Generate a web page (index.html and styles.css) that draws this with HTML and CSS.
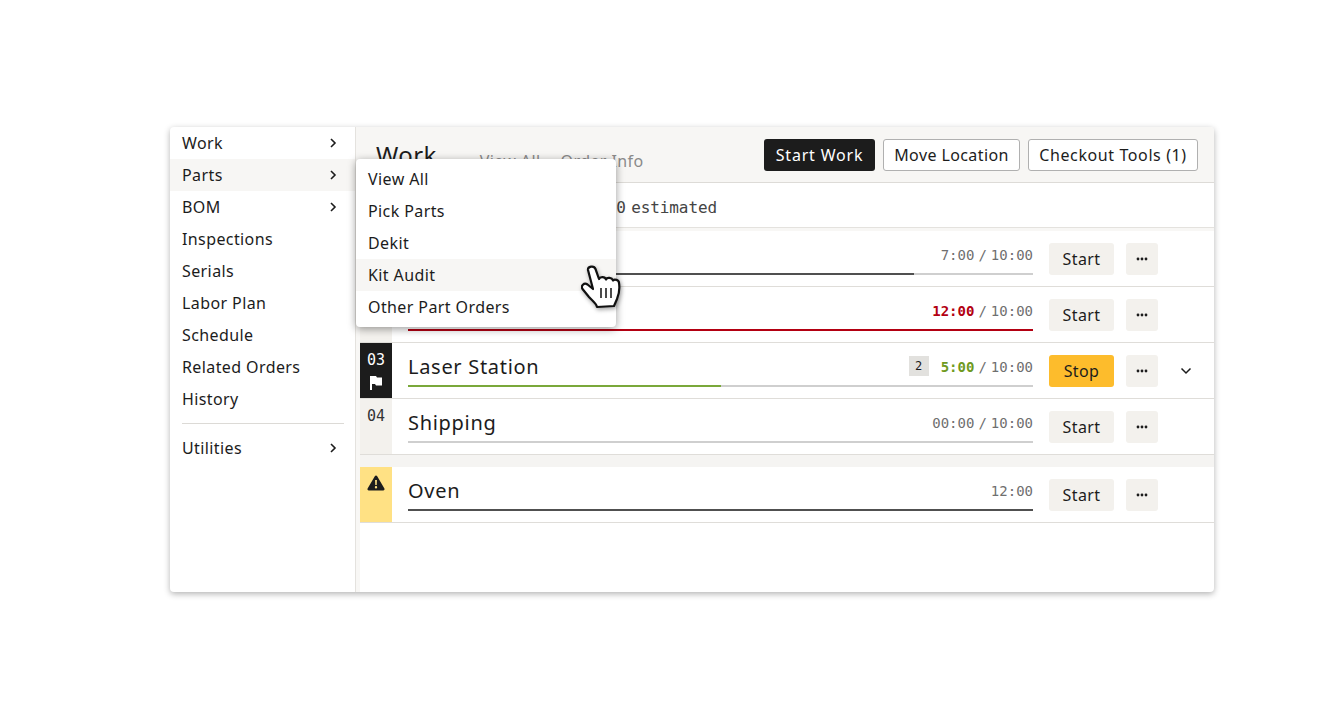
FILE: index.html
```html
<!DOCTYPE html>
<html lang="en">
<head>
    <meta charset="UTF-8">
    <meta name="viewport" content="width=device-width, initial-scale=1.0">
    <title>Work Order</title>
    <link rel="stylesheet" href="styles.css">
</head>
<body>
    <div class="app-window">
        <!-- Left nav -->
        <nav class="side-nav">
            <a class="nav-item">Work <svg class="chev" viewBox="0 0 10 12"><path d="M3 2l4 4-4 4"/></svg></a>
            <a class="nav-item active">Parts <svg class="chev" viewBox="0 0 10 12"><path d="M3 2l4 4-4 4"/></svg></a>
            <a class="nav-item">BOM <svg class="chev" viewBox="0 0 10 12"><path d="M3 2l4 4-4 4"/></svg></a>
            <a class="nav-item">Inspections</a>
            <a class="nav-item">Serials</a>
            <a class="nav-item">Labor Plan</a>
            <a class="nav-item">Schedule</a>
            <a class="nav-item">Related Orders</a>
            <a class="nav-item">History</a>
            <div class="nav-divider"></div>
            <a class="nav-item">Utilities <svg class="chev" viewBox="0 0 10 12"><path d="M3 2l4 4-4 4"/></svg></a>
        </nav>

        <!-- Main content -->
        <main class="main-panel">
            <header class="page-head">
                <h1 class="page-title">Work</h1>
                <div class="head-links">
                    <a>View All</a>
                    <a>Order Info</a>
                </div>
                <div class="head-actions">
                    <button class="btn btn-dark">Start Work</button>
                    <button class="btn btn-outline btn-move">Move Location</button>
                    <button class="btn btn-outline btn-tools">Checkout Tools (1)</button>
                </div>
            </header>

            <div class="sub-head">10:00 estimated</div>

            <div class="op-list">
                <div class="op-row">
                    <div class="op-num"></div>
                    <div class="op-body">
                        <div class="op-line">
                            <span class="op-name"></span>
                            <span class="op-time">7:00 <i>/</i> 10:00</span>
                        </div>
                        <div class="track"><div class="fill fill-dark" style="width: 81%"></div></div>
                    </div>
                    <button class="btn btn-soft btn-start">Start</button>
                    <button class="btn btn-soft btn-more"><svg viewBox="0 0 12 4"><circle cx="2" cy="2" r="1.4"/><circle cx="6" cy="2" r="1.4"/><circle cx="10" cy="2" r="1.4"/></svg></button>
                </div>
                <div class="op-row">
                    <div class="op-num"></div>
                    <div class="op-body">
                        <div class="op-line">
                            <span class="op-name"></span>
                            <span class="op-time"><b class="over">12:00</b> <i>/</i> 10:00</span>
                        </div>
                        <div class="track"><div class="fill fill-red" style="width: 100%"></div></div>
                    </div>
                    <button class="btn btn-soft btn-start">Start</button>
                    <button class="btn btn-soft btn-more"><svg viewBox="0 0 12 4"><circle cx="2" cy="2" r="1.4"/><circle cx="6" cy="2" r="1.4"/><circle cx="10" cy="2" r="1.4"/></svg></button>
                </div>
                <div class="op-row">
                    <div class="op-num op-num-dark">
                        03
                        <svg class="flag" viewBox="0 0 14 16"><path d="M1 1h6l1 1.500h5v8H7l-1-1.500H3V15H1z"/></svg>
                    </div>
                    <div class="op-body">
                        <div class="op-line">
                            <span class="op-name">Laser Station</span>
                            <span class="op-count">2</span>
                            <span class="op-time"><b class="running">5:00</b> <i>/</i> 10:00</span>
                        </div>
                        <div class="track"><div class="fill fill-green" style="width: 50%"></div></div>
                    </div>
                    <button class="btn btn-stop btn-start">Stop</button>
                    <button class="btn btn-soft btn-more"><svg viewBox="0 0 12 4"><circle cx="2" cy="2" r="1.4"/><circle cx="6" cy="2" r="1.4"/><circle cx="10" cy="2" r="1.4"/></svg></button>
                    <svg class="row-chev" viewBox="0 0 12 8"><path d="M1.500 1.500L6 6l4.500-4.500"/></svg>
                </div>
                <div class="op-row">
                    <div class="op-num">04</div>
                    <div class="op-body">
                        <div class="op-line">
                            <span class="op-name">Shipping</span>
                            <span class="op-time">00:00 <i>/</i> 10:00</span>
                        </div>
                        <div class="track"></div>
                    </div>
                    <button class="btn btn-soft btn-start">Start</button>
                    <button class="btn btn-soft btn-more"><svg viewBox="0 0 12 4"><circle cx="2" cy="2" r="1.4"/><circle cx="6" cy="2" r="1.4"/><circle cx="10" cy="2" r="1.4"/></svg></button>
                </div>

                <div class="op-gap"></div>

                <div class="op-row">
                    <div class="op-num op-num-warn">
                        <svg class="warn" viewBox="0 0 18 16"><path fill-rule="evenodd" d="M9 .5c.5 0 .9.3 1.200.7l7.200 12.400c.5.900-.1 2-1.200 2H1.800c-1.100 0-1.700-1.100-1.200-2L7.800 1.200C8.100.8 8.500.5 9 .5zM8.100 5l.2 5h1.400l.2-5zM9 11a1.200 1.200 0 100 2.400A1.200 1.200 0 009 11z"/></svg>
                    </div>
                    <div class="op-body">
                        <div class="op-line">
                            <span class="op-name">Oven</span>
                            <span class="op-time">12:00</span>
                        </div>
                        <div class="track"><div class="fill fill-dark" style="width: 100%"></div></div>
                    </div>
                    <button class="btn btn-soft btn-start">Start</button>
                    <button class="btn btn-soft btn-more"><svg viewBox="0 0 12 4"><circle cx="2" cy="2" r="1.4"/><circle cx="6" cy="2" r="1.4"/><circle cx="10" cy="2" r="1.4"/></svg></button>
                </div>
            </div>
        </main>

        <!-- Parts flyout -->
        <div class="fly-menu">
            <a class="fly-item">View All</a>
            <a class="fly-item">Pick Parts</a>
            <a class="fly-item">Dekit</a>
            <a class="fly-item active">Kit Audit</a>
            <a class="fly-item">Other Part Orders</a>
        </div>

        <!-- Hand cursor -->
        <svg class="hand" viewBox="0 0 40 46">
            <path fill="#fff" stroke="#111" stroke-width="2.2" stroke-linejoin="round" d="M7 6C6.500 2.500 13 1 14.500 5L18 15C19 12.500 24 12.500 25 15.500C26 13 31 13.500 32 16.500C33.500 14.500 38 16 38 19C39 25 38 30 36 35L33 42L16 43C15 39 11 36.500 8 33L1.500 25C-.5 22 3 18 6.500 20.500L12 25Z"/>
            <path fill="none" stroke="#111" stroke-width="1.500" d="M20 24v10M25 24v10M30 24v10"/>
        </svg>
    </div>
</body>
</html>
```
FILE: styles.css
```css
html {
    height: 100%;
}

body {
    margin: 0;
    padding: 127px 0 0 170px;
    box-sizing: border-box;
    min-height: 100%;
    background: #fff;
    color: #1c1c1c;
    font-family: 'Noto Sans', 'Inter', sans-serif;
    font-size: 16px;
}

.app-window {
    position: relative;
    display: flex;
    width: 1044px;
    height: 465px;
    background: #fff;
    border-radius: 4px;
    box-shadow: 0 2px 6px rgba(0, 0, 0, 0.3);
}

/* Left nav */
.side-nav {
    width: 185px;
    flex-shrink: 0;
    border-right: 1px solid #e4e2de;
}

.nav-item {
    display: flex;
    align-items: center;
    justify-content: space-between;
    height: 32px;
    padding: 0 17px 0 12px;
    letter-spacing: 0.4px;
}

.nav-item.active {
    background: #f7f6f4;
}

.chev {
    width: 10px;
    height: 12px;
    fill: none;
    stroke: #1c1c1c;
    stroke-width: 1.6;
}

.nav-divider {
    height: 1px;
    margin: 8px 11px 8px 12px;
    background: #dcdad6;
}

/* Main panel */
.main-panel {
    display: flex;
    flex-direction: column;
    flex: 1;
    min-width: 0;
}

.page-head {
    display: flex;
    align-items: center;
    height: 55px;
    padding: 0 16px 0 20px;
    background: #f7f6f4;
    border-bottom: 1px solid #dddbd7;
    border-radius: 0 4px 0 0;
}

.page-title {
    margin: 0;
    font-size: 24px;
    font-weight: 400;
    letter-spacing: 0.4px;
}

.head-links {
    display: flex;
    gap: 20px;
    margin: 13px 0 0 43px;
    color: #8a8a8a;
    font-size: 16px;
    letter-spacing: 0.4px;
}

.head-actions {
    display: flex;
    gap: 8px;
    margin-left: auto;
}

.btn {
    height: 32px;
    padding: 0;
    border: 1px solid transparent;
    border-radius: 3px;
    font-family: inherit;
    font-size: 16px;
    color: #1c1c1c;
    letter-spacing: 0.4px;
    cursor: pointer;
}

.btn-dark {
    width: 111px;
    background: #1c1c1c;
    color: #fff;
    letter-spacing: 0.8px;
}

.btn-outline {
    background: #fff;
    border-color: #b0b0b0;
}

.btn-move {
    width: 137px;
}

.btn-tools {
    width: 170px;
    letter-spacing: 0.6px;
}

.btn-soft {
    background: #f3f1ed;
}

.btn-stop {
    background: #fdbc2c;
}

.btn-start {
    width: 65px;
    margin-left: 16px;
}

.btn-more {
    display: flex;
    align-items: center;
    justify-content: center;
    width: 32px;
    margin-left: 12px;
}

.btn-more svg {
    width: 12px;
    height: 4px;
    fill: #1c1c1c;
}

.sub-head {
    height: 44px;
    line-height: 49px;
    padding-left: 222px;
    border-bottom: 1px solid #e4e2de;
    font-family: 'DejaVu Sans Mono', monospace;
    font-size: 16px;
    letter-spacing: -0.1px;
    word-spacing: -4px;
    color: #444;
}

/* Operation rows */
.op-list {
    flex: 1;
    border-top: 3px solid #f8f7f5;
    border-left: 4px solid #f8f7f5;
}

.op-row {
    position: relative;
    display: flex;
    align-items: flex-start;
    height: 55px;
    border-bottom: 1px solid #dfddd9;
    padding-right: 56px;
}

.op-num {
    width: 32px;
    height: 100%;
    padding-top: 8px;
    box-sizing: border-box;
    background: #f3f1ed;
    font-family: 'DejaVu Sans Mono', monospace;
    font-size: 15px;
    color: #333;
    text-align: center;
}

.op-num-dark {
    background: #1c1c1c;
    color: #fff;
}

.op-num-warn {
    background: #ffe184;
}

.flag {
    display: block;
    width: 14px;
    height: 16px;
    margin: 6px auto 0;
    fill: #fff;
}

.warn {
    display: block;
    width: 18px;
    height: 16px;
    margin: 0 auto;
    fill: #1c1c1c;
}

.op-body {
    flex: 1;
    min-width: 0;
    margin-left: 16px;
}

.op-line {
    display: flex;
    align-items: center;
    box-sizing: border-box;
    height: 42px;
    padding-top: 4px;
}

.op-name {
    flex: 1;
    font-size: 20px;
    letter-spacing: 0.7px;
}

.op-count {
    width: 20px;
    height: 20px;
    margin: 0 12px 0 0;
    background: #e2e1de;
    font-family: 'DejaVu Sans Mono', monospace;
    font-size: 12px;
    line-height: 20px;
    text-align: center;
}

.op-time {
    display: flex;
    gap: 4px;
    margin-top: 2px;
    font-family: 'DejaVu Sans Mono', monospace;
    font-size: 14px;
    color: #6f6f6f;
}

.op-time i {
    font-style: normal;
}

.over {
    color: #b30012;
}

.running {
    color: #6f9a1f;
}

.track {
    height: 2px;
    background: #cfcfcf;
}

.fill {
    height: 100%;
}

.fill-dark {
    background: #505050;
}

.fill-red {
    background: #b30012;
}

.fill-green {
    background: #7aa83a;
}

.op-row .btn {
    margin-top: 12px;
}

.row-chev {
    position: absolute;
    right: 22px;
    top: 24px;
    width: 12px;
    height: 8px;
    fill: none;
    stroke: #1c1c1c;
    stroke-width: 1.5;
}

.op-gap {
    height: 12px;
    background: #f5f4f2;
}

/* Flyout */
.fly-menu {
    position: absolute;
    left: 186px;
    top: 32px;
    width: 260px;
    padding: 4px 0;
    background: #fff;
    border-radius: 4px;
    box-shadow: 0 2px 8px rgba(0, 0, 0, 0.4);
}

.fly-item {
    display: flex;
    align-items: center;
    height: 32px;
    padding: 0 12px;
    letter-spacing: 0.4px;
}

.fly-item.active {
    background: #f7f6f4;
}

.hand {
    position: absolute;
    left: 411px;
    top: 137px;
    width: 40px;
    height: 46px;
    filter: drop-shadow(1px 2px 2px rgba(0, 0, 0, 0.35));
}
```
